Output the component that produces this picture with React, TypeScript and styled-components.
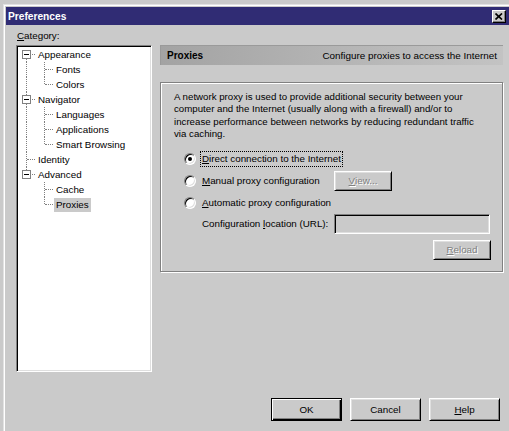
import React from 'react';
import styled, { createGlobalStyle } from 'styled-components';

const FACE = '#cacaca';
const FONT = '"Liberation Sans", Arial, sans-serif';

const GlobalStyle = createGlobalStyle`
  html, body { margin: 0; padding: 0; background: ${FACE}; overflow: hidden; }
  body { font-family: ${FONT}; font-size: 9.8px; color: #000; }
  * { box-sizing: border-box; }
`;

const Window = styled.div`
  margin: 4px 0 0 3px;
  width: 509px;
  height: 440px;
  border-top: 1px solid #e2e2e2;
  border-left: 1px solid #e2e2e2;
  border-right: 1px solid #404040;
  padding: 2px;
  box-shadow: inset 1px 1px 0 #fff;
  background: ${FACE};
  display: flex;
  flex-direction: column;
`;

const TitleBar = styled.div`
  height: 18px;
  background: #302c74;
  display: flex;
  align-items: center;
  justify-content: space-between;
  padding: 0 3px 0 2px;
`;

const Title = styled.span`
  color: #fff;
  font-weight: bold;
  font-size: 10.2px;
  letter-spacing: 0;
`;

const CloseButton = styled.span`
  width: 14px;
  height: 13px;
  background: ${FACE};
  border: 1px solid;
  border-color: #fff #000 #000 #fff;
  box-shadow: inset -1px -1px 0 #808080;
  display: flex;
  align-items: center;
  justify-content: center;
`;

const Main = styled.div`
  display: flex;
  gap: 8px;
  padding: 3px 6px 0 10px;
`;

const LeftCol = styled.div`
  width: 136px;
  display: flex;
  flex-direction: column;
`;

const CategoryLabel = styled.div`
  height: 15px;
  line-height: 15px;
  margin-bottom: 2px;
  padding-left: 1px;
`;

const Tree = styled.div`
  height: 327px;
  background: #fff;
  border: 1px solid;
  border-color: #808080 #fff #fff #808080;
  box-shadow: inset 1px 1px 0 #000, inset -1px -1px 0 #dfdfdf;
  padding: 1px 0 0 1px;
  display: flex;
  flex-direction: column;
`;

const TreeRow = styled.div`
  display: flex;
  align-items: center;
  height: 15px;
`;

type CellKind = 'blank' | 'pipe' | 'tee' | 'ell' | 'first';

const Cell = styled.span<{ $kind: CellKind }>`
  position: relative;
  width: 18px;
  height: 15px;
  flex: none;
  &::before {
    content: '';
    display: ${(p) => (p.$kind === 'blank' ? 'none' : 'block')};
    position: absolute;
    left: 8px;
    top: ${(p) => (p.$kind === 'first' ? '7px' : '0')};
    bottom: ${(p) => (p.$kind === 'ell' ? '8px' : '0')};
    border-left: 1px dotted #808080;
  }
  &::after {
    content: '';
    display: ${(p) => (p.$kind === 'blank' || p.$kind === 'pipe' ? 'none' : 'block')};
    position: absolute;
    left: 9px;
    top: 7px;
    width: 8px;
    border-top: 1px dotted #808080;
  }
`;

const ExpandBox = styled.span`
  position: absolute;
  left: 4px;
  top: 3px;
  width: 9px;
  height: 9px;
  background: #fff;
  border: 1px solid #808080;
  z-index: 1;
  display: flex;
  align-items: center;
  justify-content: center;
  &::after {
    content: '';
    width: 5px;
    height: 1px;
    background: #000;
  }
`;

const NodeLabel = styled.span<{ $selected?: boolean }>`
  height: 14px;
  line-height: 14px;
  padding: 0 2px;
  background: ${(p) => (p.$selected ? FACE : 'transparent')};
  white-space: nowrap;
`;

const RightCol = styled.div`
  width: 343px;
  padding-top: 17px;
  display: flex;
  flex-direction: column;
`;

const Header = styled.div`
  height: 20px;
  display: flex;
  align-items: center;
  justify-content: space-between;
  padding: 0 6px;
  background: linear-gradient(90deg, #a3a3a3 0%, #b4b4b4 50%, #c3c3c3 100%);
  border-top: 1px solid #9a9a9a;
  border-left: 1px solid #9a9a9a;
`;

const HeaderTitle = styled.span`
  font-weight: bold;
  font-size: 10px;
`;

const HeaderDesc = styled.span`
  font-size: 9.9px;
`;

const Group = styled.div`
  margin-top: 17px;
  height: 190px;
  border: 1px solid #808080;
  box-shadow: inset 1px 1px 0 #fff, 1px 1px 0 #fff;
  padding: 8px 11px 12px 13px;
  display: flex;
  flex-direction: column;
`;

const Para = styled.p`
  margin: 0;
  line-height: 12.4px;
  font-size: 9.7px;
`;

const Options = styled.div`
  margin: 8px 0 0 10px;
  display: flex;
  flex-direction: column;
  gap: 2px;
`;

const OptionRow = styled.div`
  display: grid;
  grid-template-columns: 150px auto;
  align-items: center;
  height: 20px;
`;

const RadioWrap = styled.label`
  display: flex;
  align-items: center;
  gap: 5px;
  white-space: nowrap;
`;

const RadioCircle = styled.span<{ $checked?: boolean }>`
  width: 12px;
  height: 12px;
  border-radius: 50%;
  background: #fff;
  border: 1px solid;
  border-color: #808080 #fff #fff #808080;
  box-shadow: inset 1px 1px 0 #000, inset -1px -1px 0 #dfdfdf;
  display: flex;
  align-items: center;
  justify-content: center;
  flex: none;
  &::after {
    content: '';
    width: 4px;
    height: 4px;
    border-radius: 50%;
    background: #000;
    display: ${(p) => (p.$checked ? 'block' : 'none')};
  }
`;

const RadioText = styled.span<{ $focused?: boolean }>`
  padding: 1px 1px;
  outline: ${(p) => (p.$focused ? '1px dotted #000' : 'none')};
  line-height: 12px;
`;

const U = styled.span`
  text-decoration: underline;
`;

const ConfigRow = styled.div`
  display: grid;
  grid-template-columns: 132px 156px;
  align-items: center;
  height: 20px;
  padding-left: 18px;
  margin-top: -1px;
`;

const Field = styled.div`
  height: 20px;
  background: ${FACE};
  border: 1px solid;
  border-color: #808080 #fff #fff #808080;
  box-shadow: inset 1px 1px 0 #000, inset -1px -1px 0 #dfdfdf;
`;

const ReloadRow = styled.div`
  display: flex;
  justify-content: flex-end;
  margin-top: 4px;
`;

const Button = styled.button<{ $default?: boolean; $small?: boolean; $disabled?: boolean }>`
  font-family: ${FONT};
  font-size: 9.8px;
  width: ${(p) => (p.$small ? '58px' : '71px')};
  height: ${(p) => (p.$small ? '20px' : '23px')};
  padding: 0;
  background: ${FACE};
  color: ${(p) => (p.$disabled ? '#808080' : '#000')};
  text-shadow: ${(p) => (p.$disabled ? '1px 1px 0 #fff' : 'none')};
  border: 1px solid;
  border-color: ${(p) => (p.$default ? '#000' : '#fff #000 #000 #fff')};
  box-shadow: ${(p) =>
    p.$default
      ? 'inset 1px 1px 0 #fff, inset -1px -1px 0 #000, inset -2px -2px 0 #808080'
      : 'inset 1px 1px 0 #dfdfdf, inset -1px -1px 0 #808080'};
  display: flex;
  align-items: center;
  justify-content: center;
`;

const Footer = styled.div`
  display: flex;
  justify-content: flex-end;
  gap: 8px;
  padding-right: 9px;
  margin-top: 26px;
`;

type Node = { label: string; cells: CellKind[]; box?: boolean; selected?: boolean };

const nodes: Node[] = [
  { label: 'Appearance', cells: ['first'], box: true },
  { label: 'Fonts', cells: ['pipe', 'tee'] },
  { label: 'Colors', cells: ['pipe', 'ell'] },
  { label: 'Navigator', cells: ['tee'], box: true },
  { label: 'Languages', cells: ['pipe', 'tee'] },
  { label: 'Applications', cells: ['pipe', 'tee'] },
  { label: 'Smart Browsing', cells: ['pipe', 'ell'] },
  { label: 'Identity', cells: ['tee'] },
  { label: 'Advanced', cells: ['ell'], box: true },
  { label: 'Cache', cells: ['blank', 'tee'] },
  { label: 'Proxies', cells: ['blank', 'ell'], selected: true },
];

export default function App() {
  return (
    <>
      <GlobalStyle />
      <Window>
        <TitleBar>
          <Title>Preferences</Title>
          <CloseButton>
            <svg width="8" height="7" viewBox="0 0 8 7">
              <path d="M0.5 0.5 L7 6.5 M7 0.5 L0.5 6.5" stroke="#000" strokeWidth="1.7" fill="none" />
            </svg>
          </CloseButton>
        </TitleBar>
        <Main>
          <LeftCol>
            <CategoryLabel>
              <U>C</U>ategory:
            </CategoryLabel>
            <Tree>
              {nodes.map((n) => (
                <TreeRow key={n.label}>
                  {n.cells.map((c, i) => (
                    <Cell key={i} $kind={c}>
                      {n.box && i === 0 ? <ExpandBox /> : null}
                    </Cell>
                  ))}
                  <NodeLabel $selected={n.selected}>{n.label}</NodeLabel>
                </TreeRow>
              ))}
            </Tree>
          </LeftCol>
          <RightCol>
            <Header>
              <HeaderTitle>Proxies</HeaderTitle>
              <HeaderDesc>Configure proxies to access the Internet</HeaderDesc>
            </Header>
            <Group>
              <Para>
                A network proxy is used to provide additional security between your
                <br />
                computer and the Internet (usually along with a firewall) and/or to
                <br />
                increase performance between networks by reducing redundant traffic
                <br />
                via caching.
              </Para>
              <Options>
                <OptionRow>
                  <RadioWrap>
                    <RadioCircle $checked />
                    <RadioText $focused>
                      <U>D</U>irect connection to the Internet
                    </RadioText>
                  </RadioWrap>
                </OptionRow>
                <OptionRow>
                  <RadioWrap>
                    <RadioCircle />
                    <RadioText>
                      <U>M</U>anual proxy configuration
                    </RadioText>
                  </RadioWrap>
                  <Button $small $disabled>
                    <U>V</U>iew...
                  </Button>
                </OptionRow>
                <OptionRow>
                  <RadioWrap>
                    <RadioCircle />
                    <RadioText>
                      <U>A</U>utomatic proxy configuration
                    </RadioText>
                  </RadioWrap>
                </OptionRow>
                <ConfigRow>
                  <span>
                    Configuration <U>l</U>ocation (URL):
                  </span>
                  <Field />
                </ConfigRow>
                <ReloadRow>
                  <Button $small $disabled>
                    <U>R</U>eload
                  </Button>
                </ReloadRow>
              </Options>
            </Group>
          </RightCol>
        </Main>
        <Footer>
          <Button $default>OK</Button>
          <Button>Cancel</Button>
          <Button>
            <U>H</U>elp
          </Button>
        </Footer>
      </Window>
    </>
  );
}
